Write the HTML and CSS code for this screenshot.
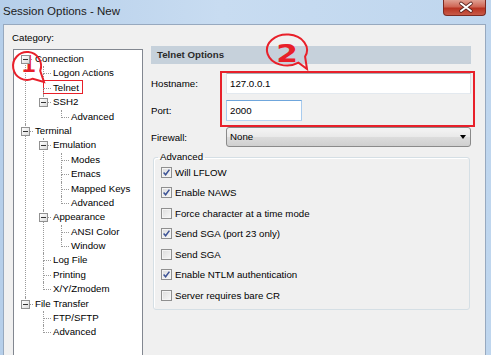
FILE: index.html
```html
<!DOCTYPE html>
<html>
<head>
    <title>Session Options - New</title>
    <link rel="stylesheet" href="styles.css">
</head>
<body>
    <div class="window">
        <div class="title-bar">
            <span class="title">Session Options - New</span>
            <span class="btn-close">
                <svg width="41" height="15" viewBox="0 0 41 15">
                    <path d="M17 3.5 L27 11 M27 3.5 L17 11" stroke="#5a2520" stroke-width="3.6" stroke-linecap="round"/>
                    <path d="M17 3.5 L27 11 M27 3.5 L17 11" stroke="#fff" stroke-width="2" stroke-linecap="round"/>
                </svg>
            </span>
        </div>

        <div class="dialog">
            <div class="col-left">
                <div class="caption">Category:</div>
                <div class="tree-box">
                    <ul class="tree">
                        <li><span class="tog"></span><span class="item">Connection</span>
                            <ul>
                                <li><span class="item">Logon Actions</span></li>
                                <li><span class="item marked">Telnet</span></li>
                                <li><span class="tog"></span><span class="item">SSH2</span>
                                    <ul>
                                        <li><span class="item">Advanced</span></li>
                                    </ul>
                                </li>
                            </ul>
                        </li>
                        <li><span class="tog"></span><span class="item">Terminal</span>
                            <ul>
                                <li><span class="tog"></span><span class="item">Emulation</span>
                                    <ul>
                                        <li><span class="item">Modes</span></li>
                                        <li><span class="item">Emacs</span></li>
                                        <li><span class="item">Mapped Keys</span></li>
                                        <li><span class="item">Advanced</span></li>
                                    </ul>
                                </li>
                                <li><span class="tog"></span><span class="item">Appearance</span>
                                    <ul>
                                        <li><span class="item">ANSI Color</span></li>
                                        <li><span class="item">Window</span></li>
                                    </ul>
                                </li>
                                <li><span class="item">Log File</span></li>
                                <li><span class="item">Printing</span></li>
                                <li><span class="item">X/Y/Zmodem</span></li>
                            </ul>
                        </li>
                        <li><span class="tog"></span><span class="item">File Transfer</span>
                            <ul>
                                <li><span class="item">FTP/SFTP</span></li>
                                <li><span class="item">Advanced</span></li>
                            </ul>
                        </li>
                    </ul>
                </div>
            </div>

            <div class="col-right">
                <div class="header">Telnet Options</div>

                <div class="form">
                    <label>Hostname:</label>
                    <div class="textbox">127.0.0.1</div>
                    <label>Port:</label>
                    <div class="textbox short">2000</div>
                    <label>Firewall:</label>
                    <div class="combo">None<span class="arrow"></span></div>
                </div>

                <fieldset class="group">
                    <legend>Advanced</legend>
                    <div class="options">
                        <div class="option"><span class="check on"></span>Will LFLOW</div>
                        <div class="option"><span class="check on"></span>Enable NAWS</div>
                        <div class="option"><span class="check"></span>Force character at a time mode</div>
                        <div class="option"><span class="check on"></span>Send SGA (port 23 only)</div>
                        <div class="option"><span class="check"></span>Send SGA</div>
                        <div class="option"><span class="check on"></span>Enable NTLM authentication</div>
                        <div class="option"><span class="check"></span>Server requires bare CR</div>
                    </div>
                </fieldset>

                <!-- marca roja sobre los campos -->
                <div class="mark-box"></div>
            </div>
        </div>

        <!-- globos de anotacion -->
        <svg class="bubble bubble-1" width="38" height="36" viewBox="0 0 38 36">
            <path d="M30.2 21.8 A14 14 0 1 0 22.9 29.7 L34 33 Z" fill="none" stroke="#e8202a" stroke-width="2"/>
        </svg>
        <span class="num num-1">1</span>

        <svg class="bubble bubble-2" width="48" height="40" viewBox="0 0 48 40">
            <path d="M41.1 24.6 A20 15.5 0 1 0 34.5 30.7 L43 37 Z" fill="none" stroke="#e8202a" stroke-width="2"/>
        </svg>
        <span class="num num-2">2</span>
    </div>
</body>
</html>
```

FILE: styles.css
```css
body {margin: 0; width: 491px; height: 355px; overflow: hidden; font-family: "Liberation Sans", Arial, sans-serif; font-size: 9.7px; color: #000; background: linear-gradient(90deg, #b6cfea, #c8dcf1 45%, #bfd6ee);}
.window {position: relative; height: 355px;}

/* barra de titulo */
.title-bar {height: 24px; display: flex; justify-content: space-between; align-items: flex-start; padding: 0 5px 0 3px;}
.title {font-size: 11.5px; line-height: 22px; color: #1b1b1b;}
.btn-close {width: 41px; height: 15px; border: 1px solid #7c2a22; border-top: none; border-radius: 0 0 4px 4px; background: linear-gradient(#e0a092, #cf6655 45%, #b83422 55%, #c85a48);}
.btn-close svg {display: block;}

/* dialogo */
.dialog {display: flex; gap: 8px; height: 340px; margin: 0 5px 0 3px; padding: 6px 0 0 9px; background: #f0f0f0; border: 1px solid #97a9bf; box-sizing: border-box;}
.col-left {width: 130px; display: flex; flex-direction: column;}
.caption {line-height: 14px; margin: 0 0 4px -1px;}
.tree-box {flex: 1; background: #fff; border: 1px solid #828790;}

/* arbol */
.tree, .tree ul {list-style: none; margin: 0; padding: 0;}
.tree {padding: 2px 0 0 11px;}
.tree ul {margin-left: 8px;}
.tree li {position: relative; padding-left: 10px;}
.tree li::before {content: ""; position: absolute; left: 0; top: 0; width: 7px; height: 7px; border-left: 1px dotted #9a9a9a; border-bottom: 1px dotted #9a9a9a;}
.tree li::after {content: ""; position: absolute; left: 0; top: 7px; bottom: 0; border-left: 1px dotted #9a9a9a;}
.tree li:last-child::after {display: none;}
.tree > li:first-child::before {border-left: none;}
.item {display: block; height: 14.4px; line-height: 14.4px; white-space: nowrap;}
.tog {position: absolute; z-index: 1; left: -4px; top: 3px; width: 7px; height: 7px; border: 1px solid #919191; background: linear-gradient(135deg, #fff, #dcdcdc);}
.tog::after {content: ""; position: absolute; left: 1px; top: 3px; width: 5px; height: 1px; background: #333;}
.marked {position: relative;}
.marked::after {content: ""; position: absolute; left: -10px; top: -1px; width: 40px; height: 14px; border: 1.5px solid #e8202a; box-sizing: border-box;}

/* panel derecho */
.col-right {position: relative; width: 320px; margin-top: 15px;}
.header {height: 18px; line-height: 18px; padding-left: 6px; background: #c6d1db; font-weight: bold; color: #2b2b2b;}
.form {display: grid; grid-template-columns: 75px 245px; row-gap: 6px; margin-top: 9px; align-items: center;}
.textbox {height: 21px; box-sizing: border-box; padding-left: 3px; line-height: 19px; background: #fff; border: 1px solid; border-color: #abadb3 #dbdfe6 #e3e9ef #e2e3ea;}
.textbox.short {width: 76px; border-color: #6fa6dc #a8cbee #b7d6f3 #a8cbee;}
.combo {position: relative; height: 20px; box-sizing: border-box; padding-left: 3px; line-height: 18px; border: 1px solid #8a8a8a; border-radius: 3px; background: linear-gradient(#f4f4f4, #e9e9e9 50%, #dcdcdc 51%, #cfcfcf);}
.arrow {position: absolute; right: 4px; top: 7px; border-left: 3.5px solid transparent; border-right: 3.5px solid transparent; border-top: 4px solid #000;}

.group {margin: 3px 1px 0 2px; padding: 0 7px 3px; border: 1px solid #d5dfe5; border-radius: 3px; box-shadow: inset 1px 1px 0 #fff;}
.group legend {padding: 0 2px; margin-left: -3px; line-height: 14px;}
.options {margin-top: -2.3px;}
.option {display: flex; align-items: center; gap: 3px; height: 20.6px;}
.check {width: 11px; height: 11px; box-sizing: border-box; border: 1px solid #8f8f8f; background: linear-gradient(135deg, #dcdcdc, #f7f7f7); box-shadow: inset 0 0 0 1px #f4f4f4;}
.check.on {background: no-repeat center/9px 9px url("data:image/svg+xml;utf8,<svg xmlns='http://www.w3.org/2000/svg' viewBox='0 0 9 9'><path d='M1.6 4.6 L3.6 6.8 L7.4 1.6' fill='none' stroke='%233d5396' stroke-width='1.5'/></svg>"), linear-gradient(135deg, #dcdcdc, #f7f7f7);}

/* anotaciones */
.mark-box {position: absolute; left: 69px; top: 25px; width: 255px; height: 56px; border: 2px solid #e8202a; box-sizing: border-box;}
.bubble {position: absolute;}
.bubble-1 {left: 10px; top: 49px;}
.bubble-2 {left: 264px; top: 32px;}
.num {position: absolute; color: #e8202a; font-weight: bold; line-height: 24px; font-size: 24px;}
.num-1 {left: 22px; top: 52px;}
.num-2 {left: 272px; top: 42px; width: 30px; text-align: center; font-family: "DejaVu Sans", sans-serif; transform: scaleX(1.3);}
```
